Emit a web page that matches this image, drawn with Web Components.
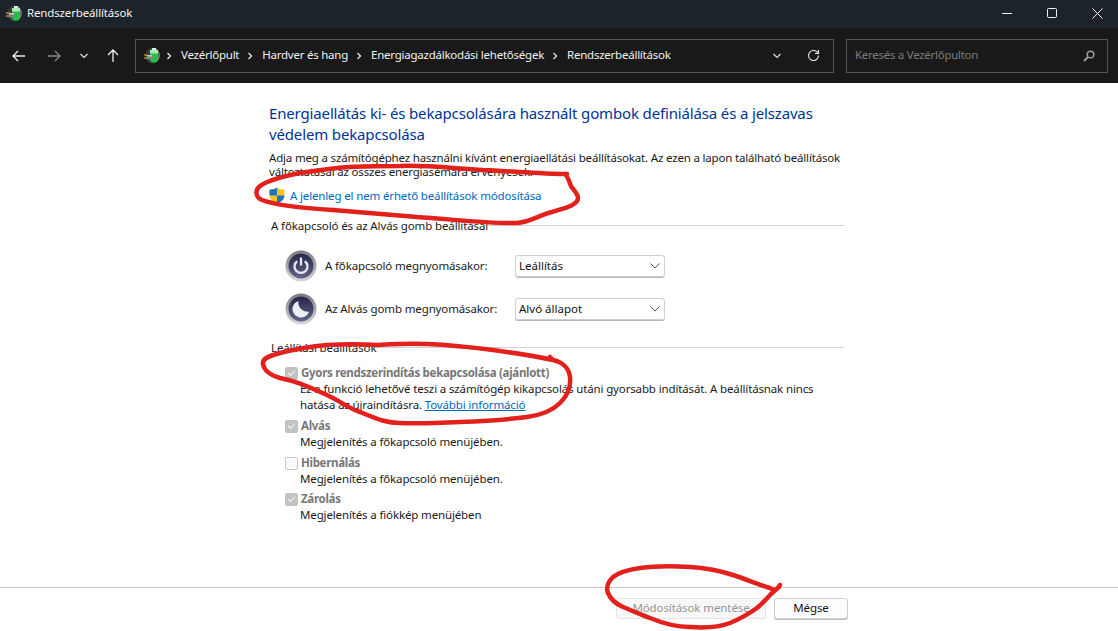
<!DOCTYPE html>
<html lang="hu">
<head>
<meta charset="utf-8">
<title>Rendszerbeállítások</title>
<style>
  html, body { margin: 0; height: 100%; overflow: hidden; background: #fff; }
  body { font-family: "Noto Sans", "Open Sans", sans-serif; font-size: 11.500px; }
</style>
</head>
<body>
<app-window></app-window>

<script>
const batteryIcon = `
  <svg width="17" height="17" viewBox="0 0 17 17">
    <ellipse cx="9.500" cy="8.500" rx="7" ry="8" fill="#37393a"/>
    <path d="M12 1.500a7 7.500 0 0 1 3 11" fill="none" stroke="#8a8d8c" stroke-width="1.200"/>
    <path d="M7 3h8v11q-4 3.500-8 0z" fill="#22c045"/>
    <path d="M7 3h8v3.500H7z" fill="#a5eeb0"/>
    <rect x="9" y="1" width="4" height="2" fill="#dcebdd"/>
    <path d="M4 8h4l2 1v2.500l-2 1H4z" fill="#7d8182"/>
    <path d="M4 8h5v1.500H4z" fill="#c4c8c8"/>
    <path d="M1 8h3M1 11h3" stroke="#f0c420" stroke-width="1.100"/>
  </svg>`;

const shieldIcon = `
  <svg width="16" height="17" viewBox="0 0 16 17">
    <path d="M8 .5C6 2 3.500 2.700 .5 2.800V8c0 4 3 7 7.500 8.500C12.500 15 15.500 12 15.500 8V2.800C12.500 2.700 10 2 8 .5z" fill="#f6c21c"/>
    <path d="M8 .5C6 2 3.500 2.700 .5 2.800V8.500H8zM8 8.500V16.500C12.500 15 15.500 12 15.500 8.500z" fill="#1f72c9"/>
  </svg>`;

const chevron = `<svg width="8" height="8" viewBox="0 0 8 8"><path d="M2.500 1l3 3-3 3" fill="none" stroke="#e8e8e8" stroke-width="1.300"/></svg>`;

customElements.define(
  "win-titlebar",
  class extends HTMLElement {
    constructor() {
      super();
      this.attachShadow({ mode: "open" });
      this.shadowRoot.innerHTML = `
        <style>
          :host {
            display: flex;
            align-items: center;
            height: 28px;
            flex: none;
            padding: 0 15px 2px 5px;
            box-sizing: border-box;
            background: #1d2429;
            color: #f2f2f2;
            font-size: 11.500px;
            letter-spacing: -0.15px;
          }
          .icon { display: flex; margin-right: 5px; }
          .title { flex: 1; margin-bottom: 2px; }
          .btns { display: flex; gap: 35px; align-items: center; }
          svg { display: block; }
        </style>
        <span class="icon">${batteryIcon}</span>
        <span class="title">Rendszerbeállítások</span>
        <div class="btns">
          <svg width="10" height="10" viewBox="0 0 10 10"><path d="M0 5.500h10" stroke="#f0f0f0"/></svg>
          <svg width="10" height="10" viewBox="0 0 10 10"><rect x=".5" y=".5" width="9" height="9" rx="1" fill="none" stroke="#f0f0f0"/></svg>
          <svg width="11" height="11" viewBox="0 0 11 11"><path d="M.5 .5l10 10M10.500 .5l-10 10" stroke="#f0f0f0"/></svg>
        </div>
      `;
    }
  }
);

customElements.define(
  "nav-toolbar",
  class extends HTMLElement {
    constructor() {
      super();
      this.attachShadow({ mode: "open" });
      const crumbs = ["Vezérlőpult", "Hardver és hang", "Energiagazdálkodási lehetőségek", "Rendszerbeállítások"];
      this.shadowRoot.innerHTML = `
        <style>
          :host {
            display: flex;
            align-items: center;
            height: 55px;
            flex: none;
            padding: 0 10px 0 12px;
            box-sizing: border-box;
            background: #191919;
            color: #f0f0f0;
            font-size: 11.500px;
          }
          svg { display: block; flex: none; }
          .navs { display: flex; align-items: center; width: 123px; flex: none; }
          .box {
            display: flex;
            align-items: center;
            height: 34px;
            box-sizing: border-box;
            border: 1px solid #565656;
          }
          .box span { margin-bottom: 2px; }
          .address { width: 699px; padding: 0 13px 0 7px; margin-right: 12px; flex: none; }
          .address .crumbs { display: flex; align-items: center; flex: 1; margin-left: 5px; }
          .crumbs span { margin: 0 7px 2px 8px; letter-spacing: -0.24px; white-space: nowrap; }
          .search {
            flex: 1;
            justify-content: space-between;
            padding: 0 12px 0 8px;
            color: #7c7c7c;
            letter-spacing: -0.28px;
          }
        </style>
        <div class="navs">
          <svg width="13" height="12" viewBox="0 0 13 12" style="margin-right:23px"><path d="M13 6H1M6 1L1 6l5 5" fill="none" stroke="#f0f0f0" stroke-width="1.300"/></svg>
          <svg width="13" height="12" viewBox="0 0 13 12" style="margin-right:19px"><path d="M0 6h12M7 1l5 5-5 5" fill="none" stroke="#8a8a8a" stroke-width="1.300"/></svg>
          <svg width="8" height="6" viewBox="0 0 8 6" style="margin-right:19px"><path d="M.5 1l3.500 3.500L7.500 1" fill="none" stroke="#e0e0e0" stroke-width="1.200"/></svg>
          <svg width="12" height="13" viewBox="0 0 12 13"><path d="M6 13V1M1 6l5-5 5 5" fill="none" stroke="#f0f0f0" stroke-width="1.300"/></svg>
        </div>
        <div class="box address">
          ${batteryIcon}
          <div class="crumbs">
            ${crumbs.map((c) => chevron + `<span>${c}</span>`).join("")}
          </div>
          <svg width="8" height="6" viewBox="0 0 8 6" style="margin-right:26px"><path d="M.5 1l3.500 3.500L7.500 1" fill="none" stroke="#e0e0e0" stroke-width="1.100"/></svg>
          <svg width="13" height="13" viewBox="0 0 13 13"><path d="M11.500 6.500a5 5 0 1 1-1.500-3.600L11.500 4.500M11.500 1v3.500H8" fill="none" stroke="#e0e0e0" stroke-width="1.200"/></svg>
        </div>
        <div class="box search">
          <span>Keresés a Vezérlőpulton</span>
          <svg width="12" height="12" viewBox="0 0 12 12"><circle cx="7.500" cy="4.500" r="3.300" fill="none" stroke="#9a9a9a" stroke-width="1.500"/><path d="M5 7L1 11" stroke="#9a9a9a" stroke-width="2"/></svg>
        </div>
      `;
    }
  }
);

customElements.define(
  "section-head",
  class extends HTMLElement {
    constructor() {
      super();
      this.attachShadow({ mode: "open" });
      this.shadowRoot.innerHTML = `
        <style>
          :host {
            display: flex;
            align-items: center;
            height: 16px;
            padding-left: 2px;
            color: #1a1a1a;
            letter-spacing: -0.12px;
          }
          .text { margin-bottom: 2px; }
          .line { flex: 1; height: 1px; background: #d0d0d0; margin-bottom: 2px; }
        </style>
        <span class="text"><slot></slot></span>
        <div class="line"></div>
      `;
    }
  }
);

customElements.define(
  "power-row",
  class extends HTMLElement {
    constructor() {
      super();
      this.attachShadow({ mode: "open" });
      const sleep = this.getAttribute("kind") === "sleep";
      const glyph = sleep
        ? `<path d="M13.500 7.900A8.500 8.500 0 1 0 24.100 18.500A9 9 0 0 1 13.500 7.900z" fill="#eceef4"/>`
        : `<path d="M12.200 11.200a6.500 6.500 0 1 0 7.600 0" fill="none" stroke="#e6e8f0" stroke-width="2.300"/><path d="M16 7.500v8" stroke="#e6e8f0" stroke-width="2.300"/>`;
      this.shadowRoot.innerHTML = `
        <style>
          :host {
            display: flex;
            align-items: center;
            height: 22px;
            padding-left: 16px;
            color: #1a1a1a;
          }
          svg.icon { flex: none; margin-right: 8px; }
          .label { width: 190px; flex: none; letter-spacing: -0.14px; white-space: nowrap; margin-bottom: 2px; }
          .select {
            width: 150px;
            height: 22px;
            box-sizing: border-box;
            border: 1px solid #cfcfcf;
            border-radius: 3px;
            display: flex;
            align-items: center;
            justify-content: space-between;
            padding: 0 4px 0 3px;
            color: #111;
            box-shadow: 0 1px 0 #b8b8b8;
          }
          .select span { margin-bottom: 2px; }
        </style>
        <svg class="icon" width="32" height="32" viewBox="0 0 32 32">
          <defs>
            <linearGradient id="ring" x1="0" y1="0" x2="0" y2="1">
              <stop offset="0" stop-color="#7b7b7f"/><stop offset="1" stop-color="#d8d8da"/>
            </linearGradient>
            <linearGradient id="disc" x1="0" y1="0" x2="0" y2="1">
              <stop offset="0" stop-color="#25264a"/><stop offset="1" stop-color="#626488"/>
            </linearGradient>
          </defs>
          <circle cx="16" cy="16" r="15.500" fill="url(#ring)"/>
          <circle cx="16" cy="16" r="12.500" fill="url(#disc)"/>
          ${glyph}
        </svg>
        <span class="label"><slot></slot></span>
        <div class="select">
          <span>${this.getAttribute("value")}</span>
          <svg width="10" height="6" viewBox="0 0 10 6"><path d="M.5 .5L5 5l4.500-4.500" fill="none" stroke="#555" stroke-width="1"/></svg>
        </div>
      `;
    }
  }
);

customElements.define(
  "option-check",
  class extends HTMLElement {
    constructor() {
      super();
      this.attachShadow({ mode: "open" });
      const on = this.hasAttribute("checked");
      this.shadowRoot.innerHTML = `
        <style>
          :host {
            display: block;
            padding-left: 16px;
            color: #1a1a1a;
            line-height: 16px;
          }
          .top { display: flex; align-items: center; gap: 3px; height: 16px; }
          .box {
            width: 13px;
            height: 13px;
            box-sizing: border-box;
            border-radius: 2px;
            flex: none;
            display: flex;
            align-items: center;
            justify-content: center;
            background: ${on ? "#c2c2c2" : "#fbfbfb"};
            border: 1px solid ${on ? "#c2c2c2" : "#c6c6c6"};
          }
          .label { font-weight: 700; color: #777; font-size: 11.500px; letter-spacing: -0.3px; white-space: nowrap; }
          .desc { margin-left: 15px; letter-spacing: -0.14px; }
          ::slotted(a) { color: #0067c0; text-decoration: underline; }
        </style>
        <div class="top">
          <span class="box">${on ? `<svg width="9" height="8" viewBox="0 0 9 8"><path d="M1 4l2.500 2.500L8 1.500" fill="none" stroke="#f2f2f2" stroke-width="1.100"/></svg>` : ""}</span>
          <span class="label">${this.getAttribute("label")}</span>
        </div>
        <div class="desc"><slot></slot></div>
      `;
    }
  }
);

customElements.define(
  "settings-page",
  class extends HTMLElement {
    constructor() {
      super();
      this.attachShadow({ mode: "open" });
      this.shadowRoot.innerHTML = `
        <style>
          :host {
            display: block;
            flex: 1;
            padding: 20px 274px 0 269px;
            background: #fff;
            color: #1a1a1a;
            font-size: 11.500px;
          }
          h1 {
            margin: 0;
            font-size: 15px;
            line-height: 21px;
            font-weight: 400;
            color: #003399;
            letter-spacing: -0.15px;
          }
          p { margin: 6px 0 0; line-height: 14px; letter-spacing: -0.18px; white-space: nowrap; }
          .uac {
            display: flex;
            align-items: center;
            gap: 5px;
            height: 16px;
            margin-top: 8px;
            color: #0067c0;
            letter-spacing: -0.15px;
          }
          section-head { margin-top: 15px; }
          .rows { display: grid; gap: 21px; margin-top: 21px; }
          .second { margin-top: 20px; }
          .opts { display: grid; gap: 5px; margin-top: 9px; }
          .opts .last { margin-top: -1px; }
          a { color: #0067c0; }
        </style>
        <h1>Energiaellátás ki- és bekapcsolására használt gombok definiálása és a jelszavas védelem bekapcsolása</h1>
        <p>Adja meg a számítógéphez használni kívánt energiaellátási beállításokat. Az ezen a lapon található beállítások<br>változtatásai az összes energiasémára érvényesek.</p>
        <div class="uac">${shieldIcon}<span>A jelenleg el nem érhető beállítások módosítása</span></div>
        <section-head>A főkapcsoló és az Alvás gomb beállításai</section-head>
        <div class="rows">
          <power-row value="Leállítás">A főkapcsoló megnyomásakor:</power-row>
          <power-row value="Alvó állapot" kind="sleep">Az Alvás gomb megnyomásakor:</power-row>
        </div>
        <section-head class="second">Leállítási beállítások</section-head>
        <div class="opts">
          <option-check checked label="Gyors rendszerindítás bekapcsolása (ajánlott)">Ez a funkció lehetővé teszi a számítógép kikapcsolás utáni gyorsabb indítását. A beállításnak nincs<br>hatása az újraindításra. <a href="#">További információ</a></option-check>
          <option-check checked label="Alvás">Megjelenítés a főkapcsoló menüjében.</option-check>
          <option-check label="Hibernálás">Megjelenítés a főkapcsoló menüjében.</option-check>
          <option-check class="last" checked label="Zárolás">Megjelenítés a fiókkép menüjében</option-check>
        </div>
      `;
    }
  }
);

customElements.define(
  "action-footer",
  class extends HTMLElement {
    constructor() {
      super();
      this.attachShadow({ mode: "open" });
      this.shadowRoot.innerHTML = `
        <style>
          :host {
            display: flex;
            justify-content: flex-end;
            gap: 8px;
            flex: none;
            height: 44px;
            box-sizing: border-box;
            padding: 10px 270px 0 0;
            border-top: 1px solid #c8c8c8;
            background: #fff;
            font-size: 11.500px;
            letter-spacing: -0.1px;
          }
          .btn {
            height: 21px;
            box-sizing: border-box;
            border: 1px solid #d0d0d0;
            border-radius: 3px;
            padding-bottom: 2px;
            display: flex;
            align-items: center;
            justify-content: center;
            color: #111;
            background: #fdfdfd;
          }
          .save { width: 150px; color: #969696; background: #f7f7f7; border-color: #e4e4e4; }
          .cancel { width: 74px; box-shadow: 0 1px 0 #bcbcbc; }
        </style>
        <div class="btn save">Módosítások mentése</div>
        <div class="btn cancel">Mégse</div>
      `;
    }
  }
);

// the red pen marks someone drew over the screenshot
customElements.define(
  "ink-marks",
  class extends HTMLElement {
    constructor() {
      super();
      this.attachShadow({ mode: "open" });
      this.shadowRoot.innerHTML = `
        <style>
          :host { position: absolute; inset: 0; pointer-events: none; }
          svg { display: block; }
          path { fill: none; stroke: #e2201c; stroke-width: 4.500; stroke-linecap: round; stroke-linejoin: round; }
        </style>
        <svg width="1118" height="631" viewBox="0 0 1118 631">
          <path d="M567 174C540 174 510 171 483 170C450 168 425 165 400 166C380 166 365 166 350 167C330 168 315 171 300 173C285 176 268 180 260 186C255 190 255 197 262 200C275 205 300 208 333 210C360 212 390 215 417 217C450 219 490 224 517 223C530 222 540 215 552 212C565 208 578 205 578 198C578 193 573 190 571 186C569 181 568 177 565 174"/>
          <path d="M377 345C360 344 345 344 327 345C305 347 292 350 280 353C268 356 262 359 263 364C264 370 270 375 280 378C295 381 305 385 327 395C340 401 348 408 360 412C375 418 385 423 400 423C420 424 440 423 460 422C485 421 505 420 527 417C542 415 553 410 560 403C568 395 571 385 570 377C569 368 562 362 553 360C535 356 515 353 493 350C470 347 450 345 427 344C410 343 395 344 377 345M553 360L550 357"/>
          <path d="M780 585C778 590 774 591 770 588C760 585 748 580 733 575C718 570 705 568 690 567C672 566 655 566 640 568C627 570 618 573 613 577C608 582 606 588 608 593C611 600 616 604 623 607C632 611 640 614 650 618C662 623 675 627 690 627C705 628 720 627 730 623C742 618 750 613 757 608C764 602 767 598 770 595C774 591 778 589 780 585"/>
        </svg>
      `;
    }
  }
);

customElements.define(
  "app-window",
  class extends HTMLElement {
    constructor() {
      super();
      this.attachShadow({ mode: "open" });
      this.shadowRoot.innerHTML = `
        <style>
          :host {
            display: flex;
            flex-direction: column;
            position: relative;
            width: 1118px;
            height: 631px;
            overflow: hidden;
          }
        </style>
        <win-titlebar></win-titlebar>
        <nav-toolbar></nav-toolbar>
        <settings-page></settings-page>
        <action-footer></action-footer>
        <ink-marks></ink-marks>
      `;
    }
  }
);
</script>
</body>
</html>
